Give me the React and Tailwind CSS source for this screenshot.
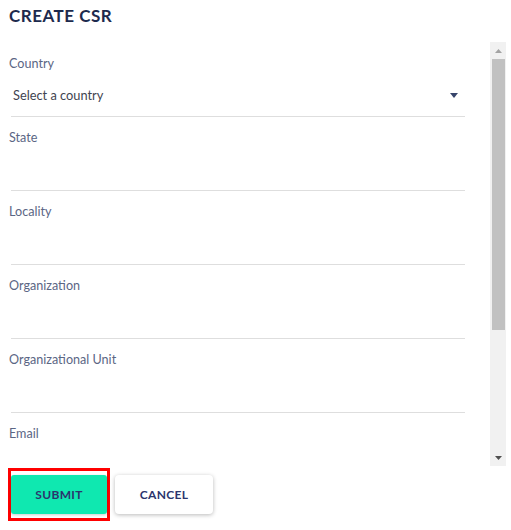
import React from 'react';

const fields = ['Country', 'State', 'Locality', 'Organization', 'Organizational Unit', 'Email'];

const Field = ({ label, first }) => (
  <div className={first ? 'pt-[14px]' : 'pt-[13px]'}>
    <div className="text-[12.6px] leading-4 text-[#5b6684]">{label}</div>
    <div className="ml-[2px] w-[454px] h-[45px] border-b border-[#dedede] flex items-start pt-[15px] pl-[2px] pr-[7px]">
      {label === 'Country' && (
        <>
          <span className="text-[12.8px] leading-4 text-[#3f4450] flex-1">Select a country</span>
          <svg width="8" height="5" viewBox="0 0 8 5" className="mt-[6px]">
            <polygon points="0,0 8,0 4,5" fill="#37456b" />
          </svg>
        </>
      )}
    </div>
  </div>
);

const App = () => {
  return (
    <div className="w-[511px] h-[530px] bg-white pl-[9px] font-['Lato','Open_Sans',sans-serif] overflow-hidden">
      {/* Title */}
      <h1 className="pt-[6px] text-[17px] leading-5 font-bold text-[#1d2a4d] tracking-[0.5px]">CREATE CSR</h1>

      {/* Scroll area */}
      <div className="mt-[16px] h-[424px] flex">
        <div className="w-[457px] overflow-hidden">
          {fields.map((f, i) => (
            <Field key={f} label={f} first={i === 0} />
          ))}
        </div>
        <div className="ml-[24px] w-[16px] h-full bg-[#f1f1f1] flex flex-col">
          <div className="h-[17px] flex items-center justify-center">
            <svg width="7" height="4" viewBox="0 0 7 4">
              <polygon points="3.5,0 7,4 0,4" fill="#a3a3a3" />
            </svg>
          </div>
          <div className="ml-[2px] mr-[1px] h-[271px] bg-[#c1c1c1]" />
          <div className="flex-1" />
          <div className="h-[17px] flex items-center justify-center">
            <svg width="7" height="4" viewBox="0 0 7 4">
              <polygon points="0,0 7,0 3.5,4" fill="#505050" />
            </svg>
          </div>
        </div>
      </div>

      {/* Buttons */}
      <div className="mt-[2px] -ml-[1px] flex items-start gap-[5px]">
        <div className="border-[3px] border-[#ff0000] py-[4px]">
          <button className="w-[96px] h-[39px] bg-[#0fe8b0] rounded-[3px] shadow-[0_1px_3px_rgba(0,0,0,0.2)] text-[12px] font-bold text-[#2b356d] tracking-[0.3px]">
            SUBMIT
          </button>
        </div>
        <button className="mt-[7px] w-[98px] h-[39px] bg-white rounded-[4px] shadow-[0_1px_4px_rgba(0,0,0,0.28)] text-[12px] font-bold text-[#2b356d] tracking-[0.3px]">
          CANCEL
        </button>
      </div>
    </div>
  );
};

export default App;
